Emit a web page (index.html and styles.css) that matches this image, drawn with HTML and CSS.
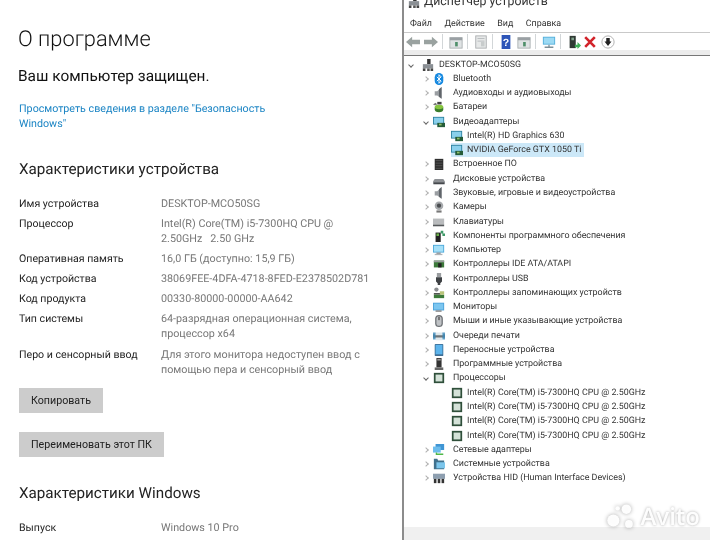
FILE: index.html
```html
<!DOCTYPE html>
<html lang="ru">
<head>
<meta charset="utf-8">
<title>О программе</title>
<link rel="stylesheet" href="styles.css">
</head>
<body>
<svg class="defs" width="0" height="0">
  <symbol id="i-pc" viewBox="0 0 14 14"><rect x="6" y="0" width="4" height="6" fill="#333"/><rect x="1" y="6" width="12" height="5" fill="#8a8f94"/><rect x="1" y="11" width="3" height="3" fill="#444"/><rect x="6" y="11" width="3" height="3" fill="#555"/><rect x="10" y="11" width="3" height="3" fill="#444"/></symbol>
  <symbol id="i-bt" viewBox="0 0 14 14"><rect x="2" y="0" width="10" height="14" rx="5" fill="#1488e0"/><path d="M4.500 4.500l5 5-2.500 2.500V2l2.500 2.500-5 5" fill="none" stroke="#fff" stroke-width="1.100"/></symbol>
  <symbol id="i-spk" viewBox="0 0 14 14"><path d="M2 5h3l5-5v14l-5-4H2z" fill="#9a9ea2"/><path d="M7 2.500v9l3 2V0z" fill="#60656a"/></symbol>
  <symbol id="i-bat" viewBox="0 0 14 14"><path d="M2 8a5 3 0 0 1 10 0v2a5 3 0 0 1-10 0z" fill="#3a7d2c"/><ellipse cx="7" cy="7" rx="5" ry="2.500" fill="#87c540"/><rect x="5" y="1" width="5" height="3" fill="#444"/><path d="M0 4l3-2 2 2-3 1z" fill="#777"/></symbol>
  <symbol id="i-vid" viewBox="0 0 14 14"><rect x="0" y="1" width="13" height="9" fill="#2c7f9c"/><rect x="1" y="2" width="11" height="7" fill="#8ad0ec"/><rect x="5" y="8" width="9" height="5" fill="#245b38"/><rect x="7" y="9" width="3" height="2" fill="#8fbf6a"/></symbol>
  <symbol id="i-emb" viewBox="0 0 14 14"><rect x="2" y="1" width="10" height="13" fill="#2e2e2e"/><path d="M3 3h8M3 6h8M3 9h8M3 12h8" stroke="#6a6a6a" stroke-width=".7"/></symbol>
  <symbol id="i-disk" viewBox="0 0 14 14"><path d="M2 7h10l2 3v3H0v-3z" fill="#8d9094"/><rect x="1" y="11" width="12" height="2" fill="#45484c"/></symbol>
  <symbol id="i-cam" viewBox="0 0 14 14"><circle cx="7" cy="5.500" r="5" fill="#a6a9ac"/><circle cx="7" cy="5.500" r="2.500" fill="#4a4d50"/><rect x="4" y="11" width="6" height="2.500" fill="#777"/></symbol>
  <symbol id="i-kbd" viewBox="0 0 14 14"><rect x="0" y="3" width="13" height="7" fill="#b9bbbd"/><rect x="0" y="10" width="13" height="2" fill="#55585b"/></symbol>
  <symbol id="i-comp" viewBox="0 0 14 14"><rect x="3" y="3" width="6" height="11" fill="#222"/><rect x="4" y="4" width="3" height="3" fill="#6ab04a"/><path d="M9 1h3v3h-3zM11 4h3v3h-3z" fill="#3f9a68"/></symbol>
  <symbol id="i-mon" viewBox="0 0 14 14"><rect x="0" y="1" width="13" height="9" fill="#4aa6d8"/><rect x="1" y="2" width="11" height="7" fill="#a6e0f8"/><rect x="4" y="10" width="5" height="1.500" fill="#8a8d90"/><rect x="2" y="11.500" width="9" height="1.500" fill="#b0b3b6"/></symbol>
  <symbol id="i-ide" viewBox="0 0 14 14"><rect x="1" y="3" width="12" height="8" fill="#3c7a3a"/><rect x="1" y="3" width="12" height="2" fill="#9a9c9e"/><rect x="6" y="6" width="4" height="5" fill="#222"/></symbol>
  <symbol id="i-usb" viewBox="0 0 14 14"><rect x="4.500" y="0" width="5" height="5" fill="#9a9da0"/><path d="M3.500 5h7v5l-2 2v2h-3v-2l-2-2z" fill="#3e4144"/></symbol>
  <symbol id="i-stor" viewBox="0 0 14 14"><circle cx="4" cy="3" r="2.500" fill="#8a8d90"/><path d="M1 7h8v2H1z" fill="#555"/><rect x="1" y="9" width="12" height="4" fill="#3c7a3a"/><rect x="8" y="5" width="5" height="4" fill="#b9c47a"/></symbol>
  <symbol id="i-moni" viewBox="0 0 14 14"><rect x="0" y="2" width="13" height="9" fill="#4aa0d8"/><rect x="1" y="3" width="11" height="7" fill="#7cc6f0"/><rect x="3" y="11" width="7" height="1.500" fill="#777"/></symbol>
  <symbol id="i-mouse" viewBox="0 0 14 14"><rect x="2.500" y="0" width="9" height="14" rx="4.500" fill="#6d7175"/><rect x="4" y="1.500" width="6" height="11" rx="3" fill="#bfc2c5"/><rect x="6.300" y="2" width="1.400" height="4" fill="#444"/></symbol>
  <symbol id="i-print" viewBox="0 0 14 14"><path d="M0 5h14v4H0z" fill="#6d7478"/><path d="M2 3h10v3H2zM3 9h8v3H3z" fill="#dfe7ec"/><path d="M0 3h3v8H0zM11 3h3v8h-3z" fill="#3b88b8" opacity=".8"/></symbol>
  <symbol id="i-port" viewBox="0 0 14 14"><rect x="2" y="0" width="10" height="14" rx="1" fill="#3f6f96"/><rect x="3" y="1" width="8" height="11" fill="#5cb4ec"/></symbol>
  <symbol id="i-soft" viewBox="0 0 14 14"><rect x="4" y="0" width="6" height="11" fill="#333"/><rect x="5" y="1" width="4" height="2" fill="#999"/><rect x="2" y="11" width="10" height="3" fill="#666"/></symbol>
  <symbol id="i-cpu" viewBox="0 0 14 14"><rect x="1" y="1" width="12" height="12" fill="#2f4f3a"/><rect x="3" y="3" width="8" height="8" fill="#d4e2d8"/></symbol>
  <symbol id="i-net" viewBox="0 0 14 14"><rect x="3" y="0" width="10" height="7" fill="#3f95d4"/><rect x="0" y="3" width="9" height="7" fill="#6cbcec"/><path d="M4 10v2h8" stroke="#4fb848" stroke-width="1.600" fill="none"/></symbol>
  <symbol id="i-sys" viewBox="0 0 14 14"><path d="M1 1h4l1 2h7v10H1z" fill="#40708c"/><rect x="4" y="5" width="10" height="7" fill="#7cc6ec"/></symbol>
  <symbol id="i-hid" viewBox="0 0 14 14"><rect x="0" y="2" width="14" height="6" fill="#8e9fb0"/><rect x="1" y="8" width="3" height="5" fill="#333"/><rect x="5.500" y="8" width="3" height="5" fill="#333"/><rect x="10" y="8" width="3" height="5" fill="#333"/></symbol>
  <symbol id="i-win" viewBox="0 0 16 16"><rect x="1" y="3" width="14" height="12" fill="#dfe3e4" stroke="#a9aeb0"/><rect x="1" y="3" width="14" height="3" fill="#9aa0a4"/><rect x="7" y="8" width="3" height="5" fill="#4f8f6a"/></symbol>
</svg>

<main class="page">
  <section class="about">
    <h1 class="about-title">О программе</h1>
    <p class="protected">Ваш компьютер защищен.</p>
    <a class="link" href="#">Просмотреть сведения в разделе "Безопасность Windows"</a>
    <h2 class="subtitle">Характеристики устройства</h2>
    <dl class="specs">
      <dt>Имя устройства</dt><dd>DESKTOP-MCO50SG</dd>
      <dt>Процессор</dt><dd>Intel(R) Core(TM) i5-7300HQ CPU @ 2.50GHz&nbsp;&nbsp; 2.50 GHz</dd>
      <dt>Оперативная память</dt><dd>16,0 ГБ (доступно: 15,9 ГБ)</dd>
      <dt>Код устройства</dt><dd>38069FEE-4DFA-4718-8FED-E2378502D781</dd>
      <dt>Код продукта</dt><dd>00330-80000-00000-AA642</dd>
      <dt>Тип системы</dt><dd>64-разрядная операционная система, процессор x64</dd>
      <dt>Перо и сенсорный ввод</dt><dd>Для этого монитора недоступен ввод с помощью пера и сенсорный ввод</dd>
    </dl>
    <button class="btn btn-copy">Копировать</button>
    <button class="btn btn-rename">Переименовать этот ПК</button>
    <h2 class="subtitle subtitle-win">Характеристики Windows</h2>
    <dl class="specs">
      <dt>Выпуск</dt><dd>Windows 10 Pro</dd>
    </dl>
  </section>

  <section class="devmgr">
    <div class="titlebar">
      <svg class="title-icon" viewBox="0 0 14 14"><use href="#i-pc"/></svg>
      <span class="title-text">Диспетчер устройств</span>
    </div>
    <nav class="menu"><span>Файл</span><span>Действие</span><span>Вид</span><span>Справка</span></nav>
    <div class="toolbar">
      <svg class="tb" viewBox="0 0 16 16"><path d="M0 8l7-6v3.500h9v5H7V14z" fill="#9aa2a0"/></svg>
      <svg class="tb tb-next" viewBox="0 0 16 16"><path d="M16 8L9 2v3.500H0v5h9V14z" fill="#9aa2a0"/></svg>
      <i class="sep"></i>
      <svg class="tb" viewBox="0 0 16 16"><use href="#i-win"/></svg>
      <i class="sep"></i>
      <svg class="tb" viewBox="0 0 16 16"><rect x="2" y="1" width="12" height="14" fill="#e6e8e8" stroke="#a8acae"/><path d="M4 4h8M4 7h8" stroke="#b5b9bb"/><rect x="8" y="8" width="4" height="5" fill="#c8cccc"/></svg>
      <i class="sep"></i>
      <svg class="tb" viewBox="0 0 16 16"><rect x="3" y="0" width="10" height="16" fill="#2d55b8"/><text x="8" y="12.500" class="tb-help">?</text></svg>
      <svg class="tb" viewBox="0 0 16 16"><use href="#i-win"/></svg>
      <i class="sep"></i>
      <svg class="tb" viewBox="0 0 16 16"><rect x="1" y="2" width="14" height="9" fill="#52aedb"/><rect x="2" y="3" width="12" height="7" fill="#9cdaf4"/><path d="M8 11v2M3 14h10" stroke="#7d8f98" stroke-width="1.500"/></svg>
      <i class="sep"></i>
      <svg class="tb" viewBox="0 0 16 16"><rect x="3" y="1" width="7" height="14" fill="#2f3a34"/><rect x="5" y="3" width="3" height="3" fill="#7fa08a"/><path d="M9 11h3V8l4 4-4 4v-2H9z" fill="#3fae58"/></svg>
      <svg class="tb tb-x" viewBox="0 0 16 16"><path d="M2.500 2.500l11 11M13.500 2.500l-11 11" stroke="#d2232a" stroke-width="3"/></svg>
      <svg class="tb tb-down" viewBox="0 0 16 16"><circle cx="8" cy="8" r="7" fill="#fff" stroke="#a9a9a9"/><path d="M6 3.500h4v4h2l-4 5-4-5h2z" fill="#222"/></svg>
    </div>
    <ul class="tree">
      <li class="row root"><b class="chev open"></b><svg class="ic" viewBox="0 0 14 14"><use href="#i-pc"/></svg><span>DESKTOP-MCO50SG</span></li>
      <li class="row"><b class="chev"></b><svg class="ic" viewBox="0 0 14 14"><use href="#i-bt"/></svg><span>Bluetooth</span></li>
      <li class="row"><b class="chev"></b><svg class="ic" viewBox="0 0 14 14"><use href="#i-spk"/></svg><span>Аудиовходы и аудиовыходы</span></li>
      <li class="row"><b class="chev"></b><svg class="ic" viewBox="0 0 14 14"><use href="#i-bat"/></svg><span>Батареи</span></li>
      <li class="row"><b class="chev open"></b><svg class="ic" viewBox="0 0 14 14"><use href="#i-vid"/></svg><span>Видеоадаптеры</span></li>
      <li class="row child"><div class="item"><svg class="ic" viewBox="0 0 14 14"><use href="#i-vid"/></svg><span>Intel(R) HD Graphics 630</span></div></li>
      <li class="row child"><div class="item selected"><svg class="ic" viewBox="0 0 14 14"><use href="#i-vid"/></svg><span>NVIDIA GeForce GTX 1050 Ti</span></div></li>
      <li class="row"><b class="chev"></b><svg class="ic" viewBox="0 0 14 14"><use href="#i-emb"/></svg><span>Встроенное ПО</span></li>
      <li class="row"><b class="chev"></b><svg class="ic" viewBox="0 0 14 14"><use href="#i-disk"/></svg><span>Дисковые устройства</span></li>
      <li class="row"><b class="chev"></b><svg class="ic" viewBox="0 0 14 14"><use href="#i-spk"/></svg><span>Звуковые, игровые и видеоустройства</span></li>
      <li class="row"><b class="chev"></b><svg class="ic" viewBox="0 0 14 14"><use href="#i-cam"/></svg><span>Камеры</span></li>
      <li class="row"><b class="chev"></b><svg class="ic" viewBox="0 0 14 14"><use href="#i-kbd"/></svg><span>Клавиатуры</span></li>
      <li class="row"><b class="chev"></b><svg class="ic" viewBox="0 0 14 14"><use href="#i-comp"/></svg><span>Компоненты программного обеспечения</span></li>
      <li class="row"><b class="chev"></b><svg class="ic" viewBox="0 0 14 14"><use href="#i-mon"/></svg><span>Компьютер</span></li>
      <li class="row"><b class="chev"></b><svg class="ic" viewBox="0 0 14 14"><use href="#i-ide"/></svg><span>Контроллеры IDE ATA/ATAPI</span></li>
      <li class="row"><b class="chev"></b><svg class="ic" viewBox="0 0 14 14"><use href="#i-usb"/></svg><span>Контроллеры USB</span></li>
      <li class="row"><b class="chev"></b><svg class="ic" viewBox="0 0 14 14"><use href="#i-stor"/></svg><span>Контроллеры запоминающих устройств</span></li>
      <li class="row"><b class="chev"></b><svg class="ic" viewBox="0 0 14 14"><use href="#i-moni"/></svg><span>Мониторы</span></li>
      <li class="row"><b class="chev"></b><svg class="ic" viewBox="0 0 14 14"><use href="#i-mouse"/></svg><span>Мыши и иные указывающие устройства</span></li>
      <li class="row"><b class="chev"></b><svg class="ic" viewBox="0 0 14 14"><use href="#i-print"/></svg><span>Очереди печати</span></li>
      <li class="row"><b class="chev"></b><svg class="ic" viewBox="0 0 14 14"><use href="#i-port"/></svg><span>Переносные устройства</span></li>
      <li class="row"><b class="chev"></b><svg class="ic" viewBox="0 0 14 14"><use href="#i-soft"/></svg><span>Программные устройства</span></li>
      <li class="row"><b class="chev open"></b><svg class="ic" viewBox="0 0 14 14"><use href="#i-cpu"/></svg><span>Процессоры</span></li>
      <li class="row child"><div class="item"><svg class="ic" viewBox="0 0 14 14"><use href="#i-cpu"/></svg><span>Intel(R) Core(TM) i5-7300HQ CPU @ 2.50GHz</span></div></li>
      <li class="row child"><div class="item"><svg class="ic" viewBox="0 0 14 14"><use href="#i-cpu"/></svg><span>Intel(R) Core(TM) i5-7300HQ CPU @ 2.50GHz</span></div></li>
      <li class="row child"><div class="item"><svg class="ic" viewBox="0 0 14 14"><use href="#i-cpu"/></svg><span>Intel(R) Core(TM) i5-7300HQ CPU @ 2.50GHz</span></div></li>
      <li class="row child"><div class="item"><svg class="ic" viewBox="0 0 14 14"><use href="#i-cpu"/></svg><span>Intel(R) Core(TM) i5-7300HQ CPU @ 2.50GHz</span></div></li>
      <li class="row"><b class="chev"></b><svg class="ic" viewBox="0 0 14 14"><use href="#i-net"/></svg><span>Сетевые адаптеры</span></li>
      <li class="row"><b class="chev"></b><svg class="ic" viewBox="0 0 14 14"><use href="#i-sys"/></svg><span>Системные устройства</span></li>
      <li class="row"><b class="chev"></b><svg class="ic" viewBox="0 0 14 14"><use href="#i-hid"/></svg><span>Устройства HID (Human Interface Devices)</span></li>
    </ul>
    <div class="statusbar"></div>
  </section>

  <div class="watermark">
    <svg class="wm-dots" viewBox="0 0 34 30"><circle cx="7" cy="19" r="7"/><circle cx="22" cy="6" r="5.500"/><circle cx="25" cy="23" r="4.500"/><circle cx="12" cy="5" r="2.500"/></svg>
    <span>Avito</span>
  </div>
</main>
</body>
</html>
```

FILE: styles.css
```css
* { box-sizing: border-box; }
html, body { margin: 0; height: 100%; background: #fff; overflow: hidden; }
body { font-family: Roboto, "Noto Sans", "Liberation Sans", sans-serif; color: #1c1c1c; text-rendering: geometricPrecision; }
.defs { position: absolute; }

.page { position: relative; display: flex; width: 710px; height: 540px; overflow: hidden; filter: blur(.3px); }

/* Left settings panel */
.about { width: 402px; flex: none; padding: 26px 0 0 19px; background: #fff; }
.about-title { margin: 0 0 0 -1px; font-size: 21.8px; font-weight: 300; line-height: 27px; color: #111; }
.protected { margin: 13px 0 0 -1px; font-size: 15.4px; line-height: 20px; color: #111; }
.link { display: block; width: 250px; margin-top: 15px; font-size: 10.7px; line-height: 15px; color: #1a84c4; text-decoration: none; }
.subtitle { margin: 28px 0 0; font-size: 15.2px; font-weight: 400; line-height: 20px; color: #222; }
.specs { display: grid; grid-template-columns: 142px 214px; margin: 17px 0 0; line-height: 15px; }
.specs dt { color: #222; padding-bottom: 5.1px; font-size: 10.6px; }
.specs dd { margin: 0; color: #777; padding-bottom: 5.1px; font-size: 10.75px; }
.btn { display: block; height: 25px; margin: 0; padding: 0 12px; border: 0; background: #cccccc; font: inherit; font-size: 10.7px; color: #222; }
.btn-copy { margin-top: 6px; }
.btn-rename { margin-top: 19px; }
.subtitle-win { margin-top: 26px; }

/* Right device manager window */
.devmgr { display: flex; flex-direction: column; flex: 1; min-width: 0; border-left: 2px solid #8c8c8c; background: #fff; }
.titlebar { display: flex; align-items: center; gap: 4px; flex: none; margin-top: -9px; padding: 1px 0 0 4px; height: 20px; font-size: 12.3px; line-height: 14px; color: #333; }
.title-icon { width: 12px; height: 12px; }
.menu { display: flex; gap: 12.5px; height: 21px; flex: none; padding: 6px 0 0 6px; font-size: 8.900px; line-height: 14px; color: #333; }
.toolbar { display: flex; align-items: center; height: 18px; flex: none; border-top: 1px solid #c9c9c9; background: #fff; }
.tb { width: 14px; height: 14px; flex: none; margin: 0 2px; }
.tb-x { margin-left: 0; }
.tb-help { font-family: "Liberation Sans", sans-serif; font-size: 12px; font-weight: 700; fill: #fff; text-anchor: middle; }
.sep { width: 1px; height: 15px; flex: none; margin: 0 4px 0 2px; background: #d2d6d8; }
.tree { flex: 1; margin: 0; padding: 2.5px 0 0; list-style: none; background: #fff; border-top: 5px solid #ececec; box-shadow: inset 0 1px 0 #777; }
.row { display: flex; align-items: center; height: 14.27px; padding-left: 19px; font-size: 8.900px; line-height: 14px; color: #333; white-space: nowrap; }
.row.root { padding-left: 4px; }
.row.child { padding-left: 47px; }
.row span { display: block; padding: 0 1px; }
.item { display: flex; align-items: center; height: 14px; padding-right: 2px; }
.selected { background: #cce8f8; }
.ic { width: 12px; height: 12px; flex: none; margin: 0 7px 0 5px; }
.row.child .ic { margin: 0 3px 0 0; }
.row.root .ic { margin: 0 4px 0 9px; }
.chev { width: 4px; height: 4px; flex: none; margin-left: 1px; border-right: 1px solid #b0b0b0; border-top: 1px solid #b0b0b0; transform: rotate(45deg); }
.chev.open { border-color: #666; transform: rotate(135deg); }
.statusbar { height: 13px; flex: none; background: #f0f0f0; }

/* Watermark */
.watermark { position: absolute; right: 10px; bottom: 9px; display: flex; align-items: center; gap: 2px; color: rgba(255,255,255,.96); font-family: "Open Sans", sans-serif; font-size: 24px; font-weight: 600; line-height: 28px; text-shadow: 0 0 3px rgba(0,0,0,.35); }
.wm-dots { width: 32px; height: 26px; fill: rgba(255,255,255,.96); filter: drop-shadow(0 0 2px rgba(0,0,0,.35)); }
```
